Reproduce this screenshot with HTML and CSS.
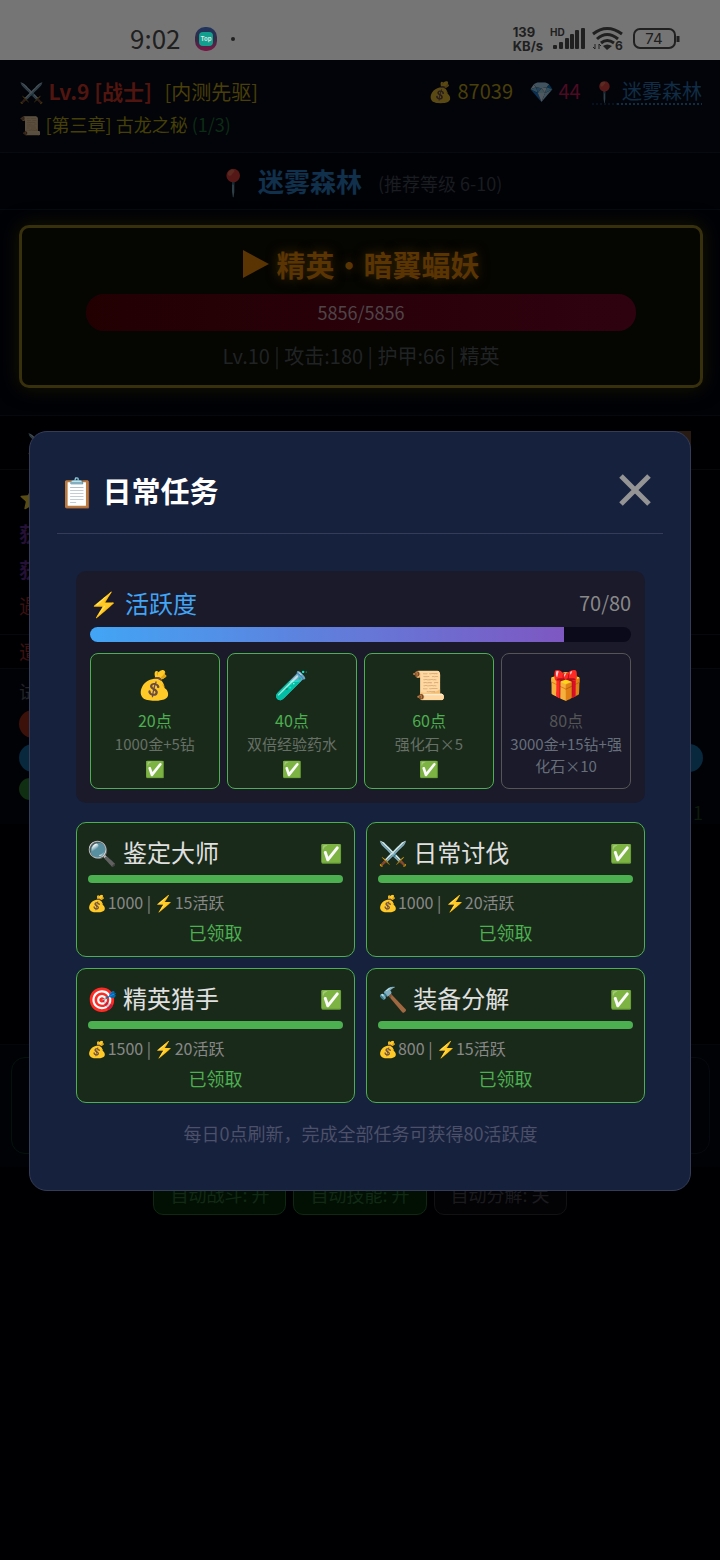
FILE: index.html
```html
<!DOCTYPE html>
<html lang="zh-CN">
  <head>
    <meta charset="UTF-8" />
    <meta name="viewport" content="width=device-width, initial-scale=1.0" />
    <title>日常任务</title>
    <link rel="stylesheet" href="styles.css">
  </head>

  <body>
    <div class="status-bar">
      <div class="status-left">
        <span class="clock">9:02</span>
        <svg class="app-icon" width="24" height="24" viewBox="0 0 24 24">
          <defs>
            <linearGradient id="ring" x1="0" y1="0" x2="0" y2="1">
              <stop offset="0" stop-color="#1c3560" />
              <stop offset="0.5" stop-color="#352a45" />
              <stop offset="1" stop-color="#7a1644" />
            </linearGradient>
          </defs>
          <rect x="1" y="0" width="22" height="24" rx="10" fill="url(#ring)" />
          <rect x="5" y="5" width="14" height="14" rx="4" fill="#12a08e" />
          <text x="12" y="14" text-anchor="middle" class="app-label">Top</text>
        </svg>
        <span class="dot"></span>
      </div>
      <div class="status-right">
        <div class="speed">139<br />KB/s</div>
        <svg width="35" height="26" viewBox="0 0 35 26" fill="#202020">
          <text x="0" y="10" class="hd-label">HD</text>
          <rect x="3" y="19" width="4" height="4" rx="1" />
          <rect x="9" y="16" width="4" height="7" rx="1" />
          <rect x="15" y="12" width="4" height="11" rx="1" />
          <rect x="20" y="8" width="4" height="15" rx="1" />
          <rect x="25" y="4" width="4" height="19" rx="1" />
          <rect x="31" y="2" width="4" height="21" rx="1" />
        </svg>
        <svg width="33" height="26" viewBox="0 0 33 26" fill="none" stroke="#202020" stroke-width="3">
          <path d="M1 8Q15 -3 30 8" />
          <path d="M5 13Q15 4 26 13" />
          <path d="M9 17Q15 12 22 17" />
          <path d="M11 20Q15 17 20 20L15 24Z" fill="#202020" stroke="none" />
          <path d="M3 18V23L1 21M7 23V18L9 20" stroke-width="1" />
          <text x="23" y="24" class="wifi-label">6</text>
        </svg>
        <svg width="48" height="24" viewBox="0 0 48 24" fill="none" stroke="#202020" stroke-width="2">
          <rect x="2" y="2" width="41" height="19" rx="6" />
          <path d="M46 9V15" stroke-width="3" />
          <text x="22" y="17" text-anchor="middle" class="battery-label">74</text>
        </svg>
      </div>
    </div>

    <div class="game">
      <header class="player">
        <div class="player-row">
          <div class="player-name">
            <span class="emoji">⚔️</span> <b class="level">Lv.9 [战士]</b>
            <span class="title-tag">[内测先驱]</span>
          </div>
          <div class="wallet">
            <span class="gold"><span class="emoji">💰</span> 87039</span>
            <span class="gem"><span class="emoji">💎</span> 44</span>
            <a href="#" class="place"><span class="emoji">📍</span> 迷雾森林</a>
          </div>
        </div>
        <div class="chapter">
          <span class="emoji">📜</span> [第三章] 古龙之秘 <span class="count">(1/3)</span>
        </div>
      </header>

      <div class="location">
        <span class="emoji">📍</span>
        <b>迷雾森林</b>
        <span class="suggest">(推荐等级 6-10)</span>
      </div>

      <section class="battle">
        <div class="enemy">
          <div class="enemy-name">
            <svg width="28" height="30" viewBox="0 0 28 30" fill="#5a3403"><path d="M1 1L27 15L1 29Z" /></svg>
            <span>精英・暗翼蝠妖</span>
          </div>
          <div class="enemy-hp">5856/5856</div>
          <div class="enemy-stats">Lv.10 | 攻击:180 | 护甲:66 | 精英</div>
        </div>
      </section>

      <div class="log-head"><span class="emoji">⚔️</span><span class="log-tab"></span></div>
      <div class="log">
        <p class="emoji">⭐</p>
        <p class="drop">获</p>
        <p class="drop">获</p>
        <p class="meet">遇</p>
      </div>
      <div class="last-log">遭</div>
      <div class="self">
        <p>试</p>
        <div class="bar hp"></div>
        <div class="bar mp"></div>
        <div class="bar xp"></div>
        <div class="xp-text">1</div>
      </div>

      <div class="skills">
        <div class="skill ready"></div>
        <div class="skill"></div>
      </div>
      <div class="toggles">
        <button class="toggle on">自动战斗: 开</button>
        <button class="toggle on">自动技能: 开</button>
        <button class="toggle">自动分解: 关</button>
      </div>
    </div>

    <div class="overlay">
      <div class="modal" role="dialog" aria-labelledby="modal-title">
        <div class="modal-header">
          <h2 id="modal-title">📋 日常任务</h2>
          <button class="close" aria-label="关闭">
            <svg width="34" height="34" viewBox="0 0 34 34" stroke="#949494" stroke-width="5"><path d="M3 3L31 31M31 3L3 31" /></svg>
          </button>
        </div>
        <div class="modal-body">
          <div class="activity">
            <div class="activity-header">
              <span class="activity-name">⚡ 活跃度</span>
              <span class="activity-value">70/80</span>
            </div>
            <div class="activity-bar"><div class="activity-fill" style="width: 87.5%"></div></div>
            <div class="rewards">
              <div class="reward done">
                <div class="reward-icon">💰</div>
                <div class="reward-point">20点</div>
                <div class="reward-desc">1000金+5钻</div>
                <div class="reward-check">✅</div>
              </div>
              <div class="reward done">
                <div class="reward-icon">🧪</div>
                <div class="reward-point">40点</div>
                <div class="reward-desc">双倍经验药水</div>
                <div class="reward-check">✅</div>
              </div>
              <div class="reward done">
                <div class="reward-icon">📜</div>
                <div class="reward-point">60点</div>
                <div class="reward-desc">强化石×5</div>
                <div class="reward-check">✅</div>
              </div>
              <div class="reward">
                <div class="reward-icon">🎁</div>
                <div class="reward-point">80点</div>
                <div class="reward-desc">3000金+15钻+强化石×10</div>
              </div>
            </div>
          </div>

          <div class="tasks">
            <div class="task">
              <div class="task-title"><span>🔍 鉴定大师</span><span class="task-check">✅</span></div>
              <div class="task-bar"></div>
              <div class="task-reward">💰1000 | ⚡15活跃</div>
              <div class="task-state">已领取</div>
            </div>
            <div class="task">
              <div class="task-title"><span>⚔️ 日常讨伐</span><span class="task-check">✅</span></div>
              <div class="task-bar"></div>
              <div class="task-reward">💰1000 | ⚡20活跃</div>
              <div class="task-state">已领取</div>
            </div>
            <div class="task">
              <div class="task-title"><span>🎯 精英猎手</span><span class="task-check">✅</span></div>
              <div class="task-bar"></div>
              <div class="task-reward">💰1500 | ⚡20活跃</div>
              <div class="task-state">已领取</div>
            </div>
            <div class="task">
              <div class="task-title"><span>🔨 装备分解</span><span class="task-check">✅</span></div>
              <div class="task-bar"></div>
              <div class="task-reward">💰800 | ⚡15活跃</div>
              <div class="task-state">已领取</div>
            </div>
          </div>
          <p class="tip">每日0点刷新，完成全部任务可获得80活跃度</p>
        </div>
      </div>
    </div>
  </body>
</html>
```
FILE: styles.css
```css
* {
  box-sizing: border-box;
}

body {
  margin: 0;
  min-height: 100vh;
  background: #000003;
  color: #e0e0e0;
  font-family: "Noto Sans CJK SC", "Noto Color Emoji", sans-serif;
  font-size: 20px;
}

p,
h2 {
  margin: 0;
}

button {
  font-family: inherit;
}

/* status bar */
.status-bar {
  display: flex;
  justify-content: space-between;
  align-items: flex-end;
  height: 60px;
  padding: 0 40px 6px 130px;
  background: #757575;
  color: #202020;
}

.status-left,
.status-right {
  display: flex;
  align-items: center;
  height: 30px;
}

.status-left {
  gap: 13px;
}

.status-right {
  gap: 7px;
}

.clock {
  padding-bottom: 2px;
  font-size: 26px;
  line-height: 26px;
}

.app-label {
  font: bold 6px "Inter", sans-serif;
  fill: #d8e8e6;
}

.dot {
  width: 4px;
  height: 4px;
  border-radius: 50%;
  background: #202020;
}

.speed {
  font: bold 13px/14px "Inter", sans-serif;
}

.hd-label {
  font: bold 10px "Inter", sans-serif;
}

.wifi-label {
  font: bold 12px "Inter", sans-serif;
  fill: #202020;
  stroke: none;
}

.battery-label {
  font: 15px "Inter", sans-serif;
  fill: #202020;
  stroke: none;
}

/* game page behind the dialog */
.game .emoji {
  opacity: 0.35;
}

.player {
  padding: 14px 18px 12px 19px;
  background: #020409;
  border-bottom: 1px solid #070a10;
}

.player-row {
  display: flex;
  justify-content: space-between;
  line-height: 34px;
}

.level {
  font-size: 21px;
  color: #51150f;
}

.title-tag {
  margin-left: 8px;
  color: #4a3f08;
}

.wallet {
  display: flex;
  gap: 16px;
}

.gold {
  color: #4a3f08;
}

.gem {
  color: #4d0b22;
}

.place {
  margin-left: -4px;
  color: #112c45;
  text-decoration: underline dotted 2px;
  text-underline-offset: 4px;
}

.chapter {
  font-size: 18px;
  line-height: 31px;
  color: #464006;
}

.count {
  color: #0c2c14;
}

.location {
  display: flex;
  justify-content: center;
  align-items: center;
  gap: 8px;
  background: #010206;
  border-bottom: 1px solid #050a10;
  line-height: 56px;
  font-size: 26px;
  color: #10304c;
}

.suggest {
  margin-left: 8px;
  padding-top: 4px;
  font-size: 18px;
  line-height: 48px;
  color: #191c20;
}

.battle {
  padding: 15px 17px 27px 19px;
  background: #010206;
  border-bottom: 1px solid #06080d;
}

.enemy {
  padding: 15px 64px 13px;
  background: #050502;
  border: 3px solid #38300c;
  border-radius: 10px;
  box-shadow: 0 0 20px #171403;
  text-align: center;
}

.enemy-name {
  display: flex;
  justify-content: center;
  align-items: center;
  gap: 6px;
  font-size: 29px;
  font-weight: bold;
  line-height: 42px;
  color: #5a3403;
  text-shadow: 0 0 12px #3c2703;
}

.enemy-hp {
  margin-top: 9px;
  border-radius: 18px;
  background: linear-gradient(90deg, #220002, #2f0210);
  font-size: 18px;
  line-height: 37px;
  color: #4f4549;
}

.enemy-stats {
  margin-top: 9px;
  line-height: 32px;
  color: #202324;
}

.log-head {
  display: flex;
  justify-content: space-between;
  align-items: center;
  height: 54px;
  padding: 0 29px 0 27px;
  border-bottom: 1px solid #06080a;
}

.log-tab {
  width: 30px;
  height: 24px;
  background: #271b14;
}

.log {
  padding: 10px 19px;
  line-height: 36px;
  border-bottom: 1px solid #06080d;
}

.drop {
  font-weight: bold;
  color: #251036;
}

.meet {
  color: #3b1110;
}

.last-log {
  padding: 0 19px;
  line-height: 33px;
  border-bottom: 1px solid #06080d;
  color: #3b1110;
}

.self {
  padding: 3px 17px 0 19px;
  background: #010206;
  font-size: 18px;
  line-height: 38px;
  color: #222428;
}

.bar {
  height: 28px;
  margin-bottom: 6px;
  border-radius: 14px;
}

.hp {
  width: 80%;
  background: #3b110a;
}

.mp {
  background: #08283e;
}

.xp {
  width: 40%;
  height: 22px;
  margin-bottom: 0;
  background: #102e12;
}

.xp-text {
  line-height: 24px;
  text-align: right;
  color: #0c1a0c;
}

.skills {
  display: grid;
  grid-template-columns: 1fr 1fr;
  gap: 10px;
  margin-top: 220px;
  padding: 12px 10px 13px 11px;
  background: #010206;
  border-top: 1px solid #040609;
}

.skill {
  height: 97px;
  border: 1px solid #06090f;
  border-radius: 14px;
}

.ready {
  border-color: #04120d;
}

.toggles {
  display: flex;
  justify-content: center;
  gap: 7px;
  padding-top: 6px;
}

.toggle {
  padding: 0 16px;
  border: 1px solid #121215;
  border-radius: 10px;
  background: #030305;
  font-size: 18px;
  line-height: 40px;
  color: #1b1b1f;
}

.toggle.on {
  border-color: #0e2811;
  background: #021004;
  color: #112a14;
}

/* daily tasks dialog */
.overlay {
  position: fixed;
  top: 62px;
  right: 0;
  bottom: 0;
  left: 0;
  display: flex;
  justify-content: center;
  align-items: center;
}

.modal {
  width: 92%;
  padding: 27px;
  background: #16213e;
  border: 1px solid #343c58;
  border-radius: 18px;
}

.modal-header {
  display: flex;
  justify-content: space-between;
  align-items: center;
  padding: 0 11px 12px 3px;
  border-bottom: 1px solid #343c58;
}

.modal-header h2 {
  font-size: 29px;
  line-height: 62px;
  color: #fff;
}

.close {
  display: flex;
  padding: 0;
  border: none;
  background: none;
  cursor: pointer;
}

.modal-body {
  padding: 37px 18px 16px 19px;
}

.activity {
  padding: 14px;
  background: #1a1a2a;
  border-radius: 10px;
}

.activity-header {
  display: flex;
  justify-content: space-between;
  line-height: 36px;
}

.activity-name {
  font-size: 24px;
  color: #42a5f5;
}

.activity-value {
  color: #888;
}

.activity-bar {
  height: 15px;
  margin: 6px 0 11px;
  overflow: hidden;
  border-radius: 8px;
  background: #0a0a1a;
}

.activity-fill {
  height: 100%;
  background: linear-gradient(90deg, #42a5f5, #7e57c2);
}

.rewards {
  display: grid;
  grid-template-columns: repeat(4, 1fr);
  gap: 7px;
}

.reward {
  padding: 8px 7px;
  border: 1px solid #555;
  border-radius: 8px;
  text-align: center;
}

.reward-icon {
  margin-bottom: 3px;
  font-size: 28px;
  line-height: 42px;
}

.reward-point {
  font-size: 16px;
  line-height: 26px;
  color: #555;
}

.reward-desc {
  font-size: 15px;
  line-height: 22px;
  color: #666e7a;
}

.reward-check {
  margin-top: 1px;
  font-size: 16px;
  line-height: 24px;
}

.done {
  background: #1a2a1a;
  border-color: #4caf50;
}

.done .reward-point {
  color: #4caf50;
}

.done .reward-desc {
  color: #667066;
}

.tasks {
  display: grid;
  grid-template-columns: 1fr 1fr;
  gap: 11px;
  margin-top: 19px;
}

.task {
  padding: 11px 11px 10px;
  background: #1a2a1a;
  border: 1px solid #4caf50;
  border-radius: 10px;
}

.task-title {
  display: flex;
  justify-content: space-between;
  font-size: 24px;
  line-height: 36px;
}

.task-check {
  font-size: 18px;
}

.task-bar {
  height: 8px;
  margin: 5px 0 7px;
  border-radius: 4px;
  background: #4caf50;
}

.task-reward {
  font-size: 16px;
  line-height: 25px;
  color: #888;
}

.task-state {
  margin-top: 3px;
  font-size: 18px;
  line-height: 28px;
  text-align: center;
  color: #4caf50;
}

.tip {
  margin-top: 16px;
  font-size: 18px;
  line-height: 28px;
  text-align: center;
  color: #4c5068;
}
```
